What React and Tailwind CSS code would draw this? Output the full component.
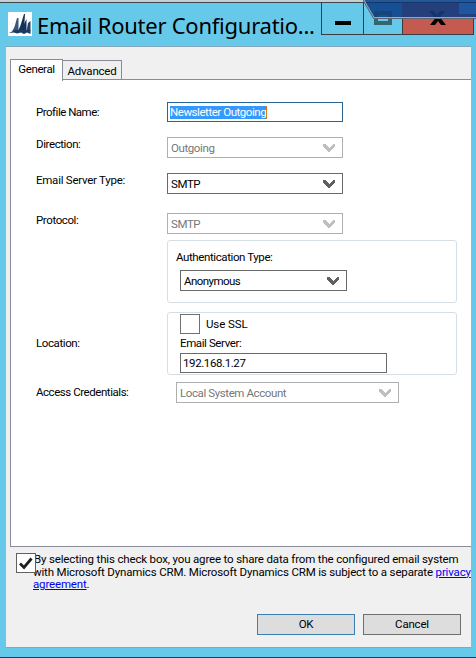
import React from "react";

function Chevron({ muted }) {
  return (
    <svg width="12" height="10" viewBox="0 0 12 10" className="shrink-0" shapeRendering="crispEdges">
      <path d="M0 0.5L1.5 0.5L6 5L10.5 0.5L12 0.5V4L6 9.8L0 4Z" fill={muted ? "#bfbfbf" : "#606060"} />
    </svg>
  );
}

function Select({ value, muted, className, textClass = "" }) {
  return (
    <div
      className={`flex h-[21px] items-center justify-between border bg-white pr-[7px] pl-[3px] ${
        muted ? "border-[#acb0b2] text-[#777]" : "border-[#6a6a6a] text-black"
      } ${className}`}
    >
      <span className={`pt-px ${textClass}`}>{value}</span>
      <Chevron muted={muted} />
    </div>
  );
}

function Row({ label, labelClass, children, className }) {
  return (
    <div className={`flex items-start ${className}`}>
      <div className={`w-[131px] shrink-0 ${labelClass}`}>{label}</div>
      {children}
    </div>
  );
}

function TitleBar() {
  return (
    <header className="relative flex h-[43px] items-start pl-2">
      <svg width="24" height="24" viewBox="0 0 24 24" className="mt-[9px] shrink-0">
        <rect width="24" height="24" fill="#fdfefe" />
        <path d="M4 19C6.500 17 7.500 11 9 6L10.500 6V19Z" fill="#3b5679" />
        <path d="M10 19C12.500 15 14 8 16 2L17 2L16 19Z" fill="#14315a" />
        <path d="M15 19L16 12L18.500 7L18.500 19Z" fill="#14315a" />
        <path d="M18.500 19L20 11L22.500 9V19Z" fill="#234268" />
        <path d="M1 21L7 18H22.500V22L19 20.500L16 22L13 20.500L9 21.500L6 20.500Z" fill="#1c3961" />
      </svg>
      <h1 className="mt-[5px] ml-[5px] w-[284px] text-[22px] leading-[34px] tracking-[-0.25px] whitespace-nowrap text-black [font-family:'Noto_Sans',sans-serif]">
        Email Router Configuratio...
      </h1>
      <div className="flex h-8 w-[153px] shrink-0 border-x border-b border-[#3c3c40]">
        <div className="flex w-[41px] items-start justify-center pt-[18px]">
          <div className="h-1 w-4 bg-black" />
        </div>
        <div className="flex w-[39px] items-start justify-center border-l border-[#3c3c40] pt-2">
          <div className="h-[14px] w-[18px] border-4 border-[#35666f]" />
        </div>
        <div className="flex w-[71px] items-start justify-center border-l border-[#3c3c40] bg-[#c45a50] pt-2">
          <svg width="16" height="14" viewBox="0 0 16 14">
            <path d="M0 0H5L8 4L11 0H16L10.5 7L16 14H11L8 10L5 14H0L5.5 7Z" fill="#000" />
          </svg>
        </div>
      </div>
      <svg width="113" height="20" viewBox="0 0 113 20" className="absolute -top-[3px] left-[363px]">
        <path d="M0 0H113V17.5H10Z" fill="#164f93" />
        <path d="M39 3H113V17.5H39Z" fill="#253f7c" />
        <path d="M0 0H113V3H2Z" fill="#26569a" />
        <path d="M96 0H113V14H96Z" fill="#1f56a0" />
        <path d="M2 2.5H113" stroke="#123869" />
        <path d="M13 13V17M27 13V17M11 13H29" fill="none" stroke="#164577" strokeWidth="4" />
        <path d="M66 11H71L74 15L77 11H82L77 17.5H71Z" fill="#10356f" />
        <path d="M0 0L10.5 18.5H113" fill="none" stroke="#5b6571" />
        <path d="M1 0L11 17.5H113" fill="none" stroke="#a2b2c5" strokeWidth="0.9" />
      </svg>
    </header>
  );
}

export default function App() {
  return (
    <div className="flex h-[658px] w-[476px] flex-col overflow-hidden border-b border-[#243f4c] bg-[#66c9e9] text-[11.5px] leading-[13px] tracking-[-0.4px] text-black [font-family:Roboto,'Liberation_Sans',sans-serif]">
      <div className="h-[3px] shrink-0 border-b border-[#3b464b] bg-[#c3d1d7]" />
      <TitleBar />
      <main className="ml-[6px] flex h-[602px] w-[465px] flex-col border-y border-[#86a7bb] bg-[#f0f0f0]">
        <div className="mt-3 ml-1 flex h-5 items-end">
          <div className="relative z-10 -mb-[2px] flex h-[22px] w-[53px] justify-center border border-b-0 border-[#898b99] bg-white pt-[3px]">
            General
          </div>
          <div className="-ml-px flex h-[19px] w-[60px] justify-center border border-b-0 border-[#898b99] bg-[#efeff0] pt-[4px] tracking-[-0.2px]">
            Advanced
          </div>
        </div>
        <section className="ml-1 h-[468px] w-[461px] border border-r-0 border-[#898b99] bg-white pt-[22px] pl-[25px]">
          <Row label="Profile Name:" labelClass="pt-1 tracking-[-0.5px]" className="h-[35px]">
            <div className="flex h-5 w-[176px] items-center border border-[#2b6593] bg-white pl-[2px]">
              <span className="border-r border-[#d07010] bg-[#3399ff] tracking-[-0.45px] text-white">Newsletter Outgoing</span>
            </div>
          </Row>
          <Row label="Direction:" labelClass="pt-px" className="h-9">
            <Select value="Outgoing" muted className="w-[176px]" />
          </Row>
          <Row label="Email Server Type:" labelClass="pt-px tracking-[-0.25px]" className="h-10">
            <Select value="SMTP" className="w-[176px]" />
          </Row>
          <Row label="Protocol:" labelClass="pt-px" className="h-[27px]">
            <Select value="SMTP" muted className="w-[176px]" />
          </Row>
          <Row label="" labelClass="" className="h-[72px]">
            <div className="h-[63px] w-[290px] rounded-[3px] border border-[#d5dfe8] pt-[10px] pl-2">
              <div>Authentication Type:</div>
              <Select value="Anonymous" className="mt-[6px] ml-1 w-[167px]" textClass="tracking-[-0.55px]" />
            </div>
          </Row>
          <Row label="Location:" labelClass="pt-[25px]" className="h-[70px]">
            <div className="h-[63px] w-[290px] rounded-[3px] border border-[#d5dfe8] pt-px pl-3">
              <div className="flex items-center gap-[6px]">
                <div className="size-5 border border-[#707070] bg-white" />
                <span className="tracking-[-0.1px]">Use SSL</span>
              </div>
              <div className="mt-[3px] tracking-[-0.4px]">Email Server:</div>
              <div className="mt-[3px] flex h-5 w-[207px] items-center border border-[#6a6a6a] bg-white pl-[2px]">
                192.168.1.27
              </div>
            </div>
          </Row>
          <Row label="Access Credentials:" labelClass="pt-[4px] tracking-[-0.45px]" className="h-[30px]">
            <Select value="Local System Account" muted className="ml-[9px] w-[223px]" />
          </Row>
        </section>
        <div className="relative mt-[6px] h-[61px] pl-[27px] leading-[12.7px] tracking-[-0.16px] whitespace-nowrap">
          <div className="pl-px">By selecting this check box, you agree to share data from the configured email system</div>
          <div>
            with Microsoft Dynamics CRM. Microsoft Dynamics CRM is subject to a separate{" "}
            <a className="text-[#0000ee] underline">privacy</a>
          </div>
          <div>
            <a className="text-[#0000ee] underline">agreement</a>.
          </div>
          <div className="absolute top-0 left-[10px] flex size-5 items-center justify-center border border-[#606060] bg-white">
            <svg width="14" height="13" viewBox="0 0 14 13">
              <path d="M1 6.5L5 10.5L12.5 1.5" fill="none" stroke="#202020" strokeWidth="2.8" />
            </svg>
          </div>
        </div>
        <div className="ml-[251px] flex gap-2">
          <button className="h-[21px] w-[98px] border border-[#3c7fb1] bg-[#dddddd]">OK</button>
          <button className="h-[21px] w-[98px] border border-[#707070] bg-[#dddddd] tracking-[-0.2px]">Cancel</button>
        </div>
      </main>
    </div>
  );
}
